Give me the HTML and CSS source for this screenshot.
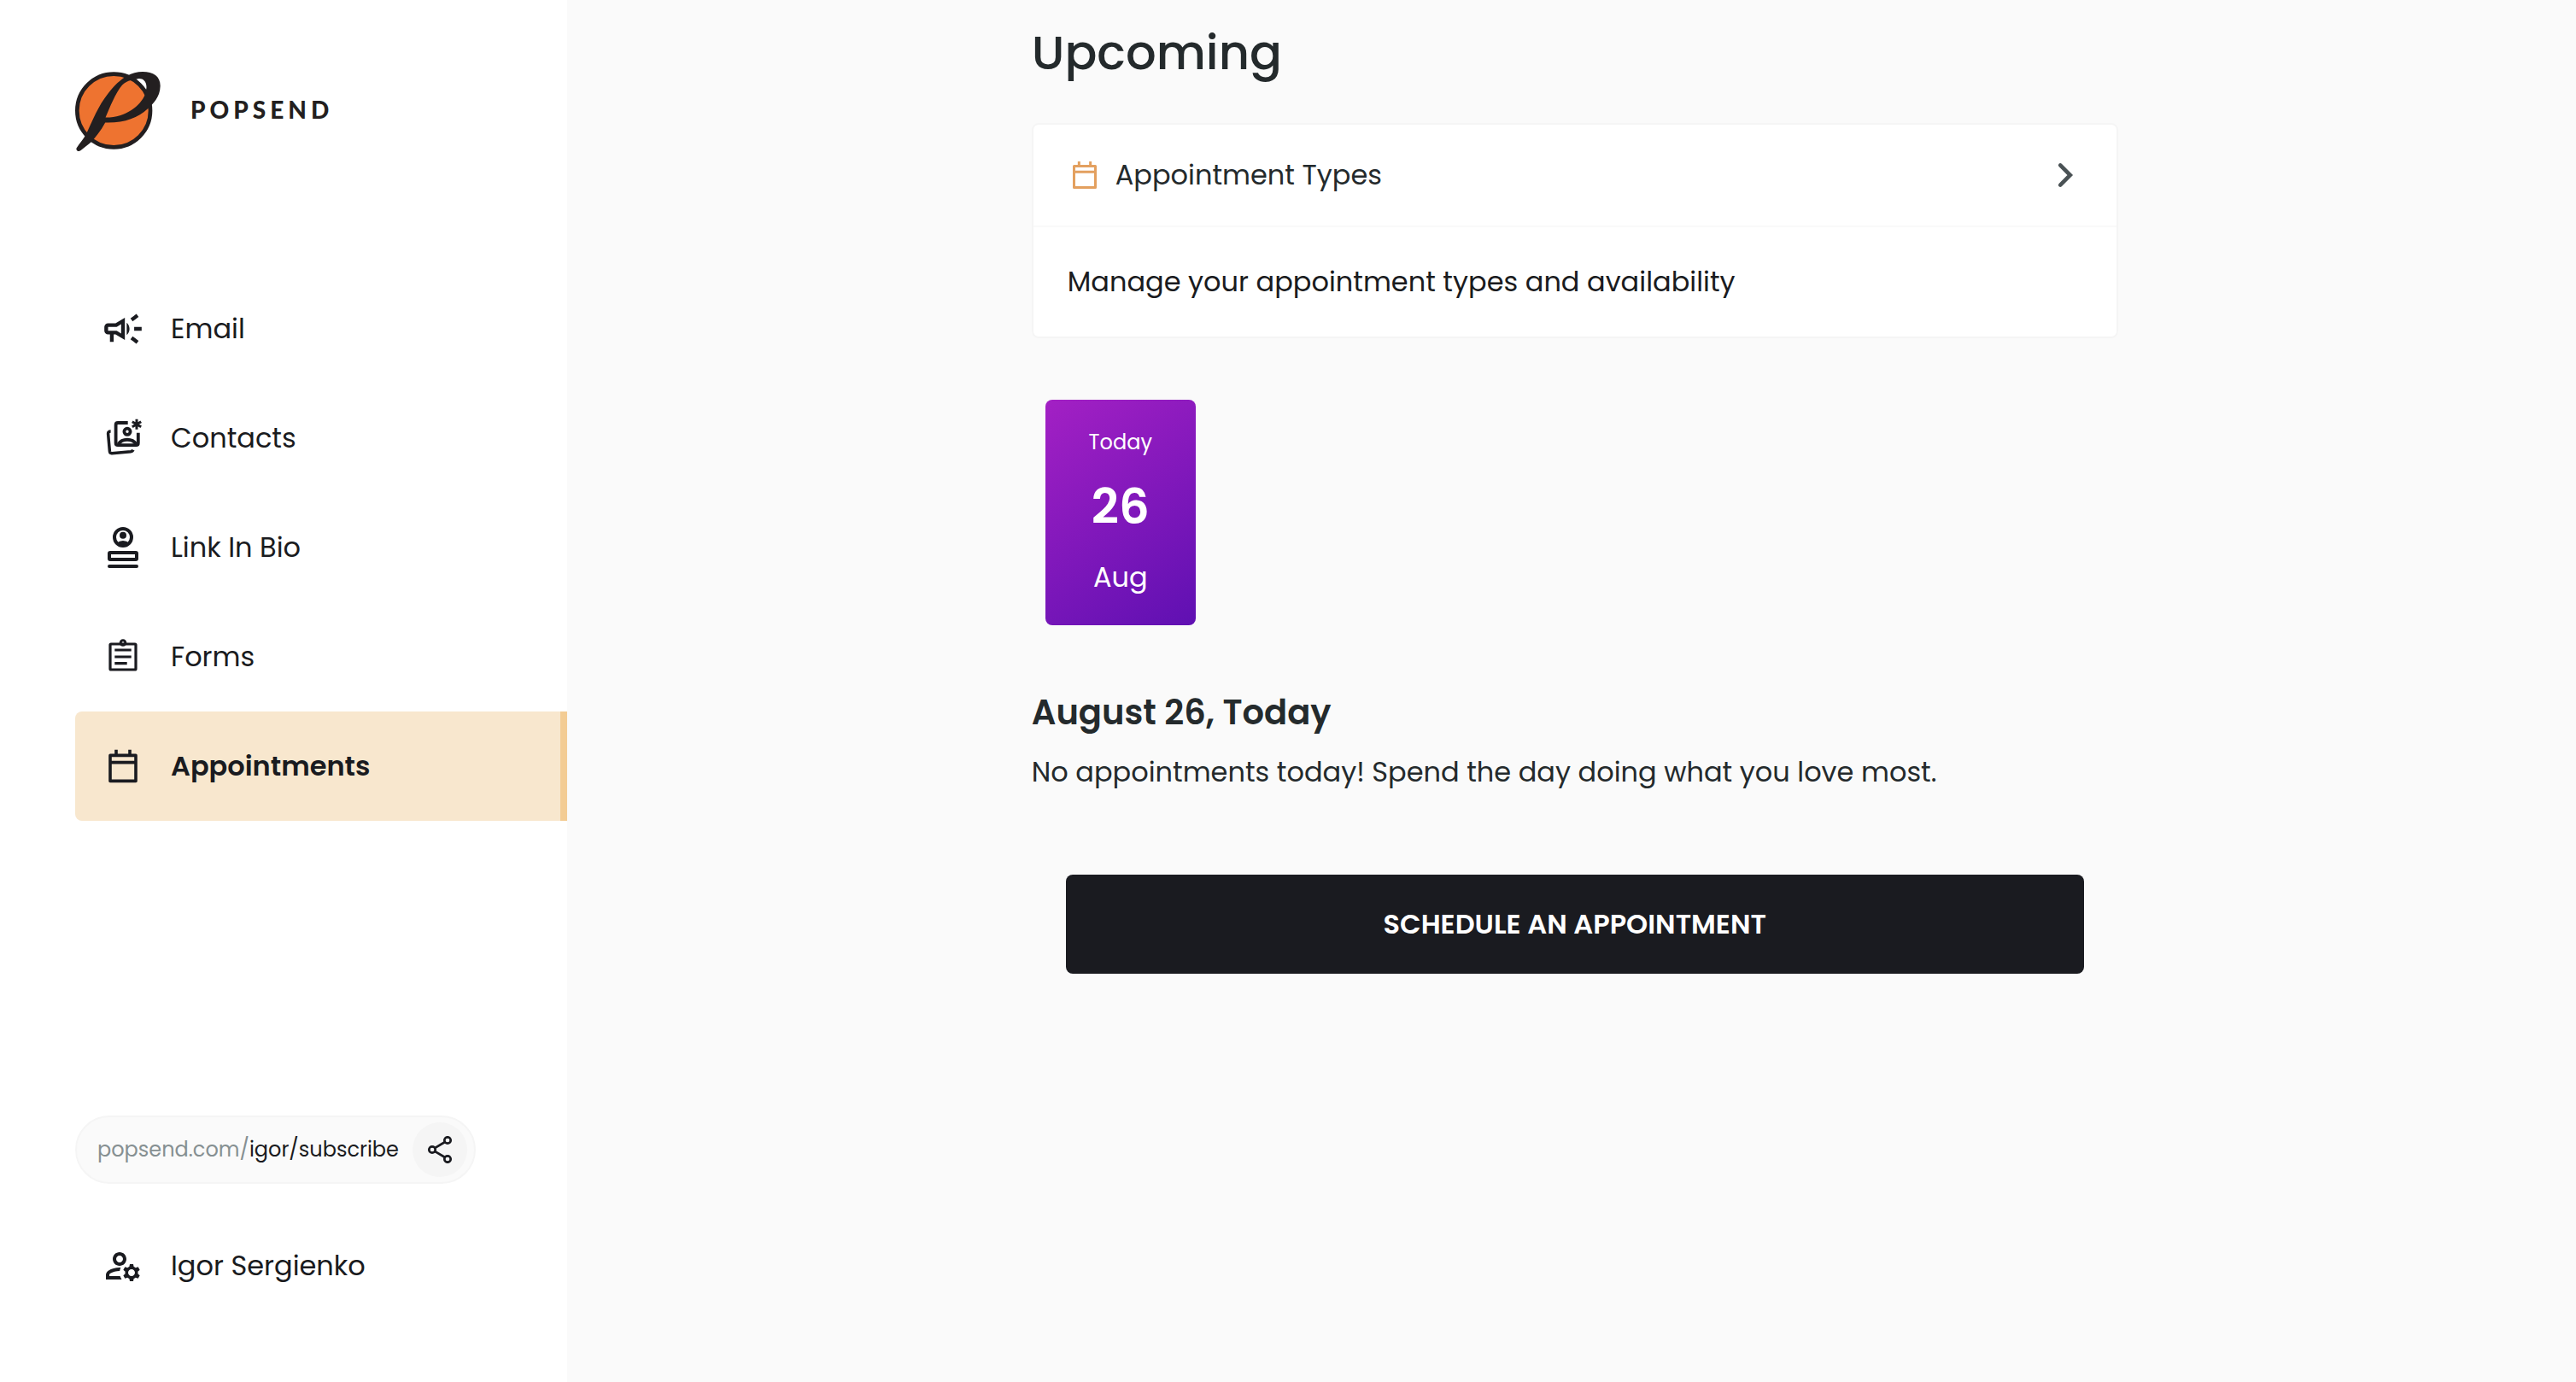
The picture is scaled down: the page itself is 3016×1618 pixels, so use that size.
FILE: index.html
```html
<!DOCTYPE html>
<html lang="en">
<head>
  <meta charset="UTF-8">
  <title>Popsend - Appointments</title>
  <meta name="viewport" content="width=device-width, initial-scale=1.0">
  <link rel="stylesheet" href="styles.css">
</head>
<body>

<!-- Shared icons -->
<svg class="sprite" aria-hidden="true">
  <symbol id="icon-calendar" viewBox="0 0 48 48">
    <path d="M9 11.4h30v30H9zM9 19.6h30M16 4.8v6M32 4.8v6" fill="none" stroke="currentColor" stroke-width="3.6" stroke-linejoin="round"/>
  </symbol>
</svg>

<div class="layout">
  <aside class="sidebar">
    <a class="logo" href="#">
      <svg class="logo-mark" viewBox="84 71 301 280" aria-hidden="true">
        <circle cx="220" cy="208" r="129" fill="#ee7330" stroke="#231f20" stroke-width="14"/>
        <path fill="#231f20" fill-rule="evenodd" d="M92 350Q86 346 89 340C103 318 118 303 126 284C145 244 166 190 200 148C222 118 245 98 266 86C284 76 302 71 322 71C360 71 385 88 384 122C383 160 359 184 340 201C304 234 256 252 190 250C174 280 156 302 139 320L104 348Q98 352 92 350ZM191 232C206 198 226 146 250 118Q264 104 280 101L300 97C318 91 338 102 335 130L330 152C314 190 262 233 191 232Z"/>
      </svg>
      <span class="logo-text">POPSEND</span>
    </a>

    <nav class="nav">
      <a class="nav-item" href="#">
        <svg class="icon" viewBox="1 1 22 22" fill="currentColor" aria-hidden="true">
          <path d="M18 11v2h4v-2zM16 17.61c.96.71 2.21 1.65 3.2 2.39.4-.53.8-1.07 1.2-1.6-.99-.74-2.24-1.68-3.2-2.4-.4.54-.8 1.08-1.2 1.61zM20.4 5.6c-.4-.53-.8-1.07-1.2-1.6-.99.74-2.24 1.68-3.2 2.4.4.53.8 1.07 1.2 1.6.96-.72 2.21-1.65 3.2-2.4zM4 9c-1.1 0-2 .9-2 2v2c0 1.1.9 2 2 2h1v4h2v-4h1l5 3V6L8 9H4zm5.03 1.71L11 9.53v4.94l-1.97-1.18-.48-.29H4v-2h4.55l.48-.29zM15.5 12c0-1.33-.58-2.53-1.5-3.35v6.69c.92-.81 1.5-2.01 1.5-3.34z"/>
        </svg>
        Email
      </a>
      <a class="nav-item" href="#">
        <svg class="icon" viewBox="0 0 48 48" fill="none" stroke="currentColor" stroke-width="3.8" aria-hidden="true">
          <path d="M29.7 6H18q-2.4 0-2.4 2.4v21.4q0 2.4 2.4 2.4h21.4q2.4 0 2.4-2.4V17.7"/>
          <circle cx="29" cy="16.3" r="3.6"/>
          <path d="M18.5 31c4.5-7 16.5-7 21 0"/>
          <path d="M9.6 16q-3.2 0-3 3l1.8 20.4q.3 2.5 2.6 2.3l22-2q2.3-.3 3-1.9" stroke-width="3.5"/>
          <path d="M40 1.7v12M34.8 4.7l10.4 6M45.2 4.7l-10.4 6" stroke-width="3"/>
        </svg>
        Contacts
      </a>
      <a class="nav-item" href="#">
        <svg class="icon" viewBox="0 0 48 48" fill="none" stroke="currentColor" stroke-width="4" aria-hidden="true">
          <circle cx="24" cy="12" r="10"/>
          <circle cx="24" cy="9.7" r="4" fill="currentColor" stroke="none"/>
          <path d="M16 19Q24 13 32 19Q24 26 16 19z" fill="currentColor" stroke="none"/>
          <rect x="8" y="30" width="32" height="8" rx="1"/>
          <path d="M8 46h32" stroke-linecap="round"/>
        </svg>
        Link In Bio
      </a>
      <a class="nav-item" href="#">
        <svg class="icon" viewBox="0 0 48 48" fill="none" stroke="currentColor" stroke-width="3.2" aria-hidden="true">
          <rect x="9" y="9" width="30" height="30" rx="1"/>
          <circle cx="24" cy="7.5" r="2.8" stroke-width="3"/>
          <path d="M14.3 16h19.4M14.3 24h19.4M14.3 31.7h14.4"/>
        </svg>
        Forms
      </a>
      <a class="nav-item active" href="#" aria-current="page">
        <svg class="icon" aria-hidden="true"><use href="#icon-calendar"/></svg>
        Appointments
      </a>
    </nav>

    <div class="sidebar-footer">
      <div class="share-link">
        <a class="share-url" href="#"><span class="share-domain">popsend.com/</span>igor/subscribe</a>
        <button class="share-button" type="button" aria-label="Share">
          <svg class="icon-share" viewBox="0 0 32 32" fill="none" stroke="currentColor" stroke-width="2.7" aria-hidden="true">
            <circle cx="25" cy="5" r="3.7"/>
            <circle cx="25" cy="27" r="3.7"/>
            <circle cx="7" cy="16" r="3.7"/>
            <path d="M10 14.2L22 7M10 17.8L22 25"/>
          </svg>
        </button>
      </div>
      <a class="nav-item" href="#">
        <svg class="icon" viewBox="0 0 24 24" fill="currentColor" aria-hidden="true">
          <path d="M4 18v-.65c0-.34.16-.66.41-.81C6.1 15.53 8.03 15 10 15c.03 0 .05 0 .08.01.1-.7.3-1.37.59-1.98-.22-.02-.44-.03-.67-.03-2.42 0-4.68.67-6.61 1.82-.88.52-1.39 1.5-1.39 2.53V20h9.26c-.42-.6-.75-1.28-.97-2H4zM10 12c2.21 0 4-1.79 4-4s-1.79-4-4-4-4 1.79-4 4 1.79 4 4 4zm0-6c1.1 0 2 .9 2 2s-.9 2-2 2-2-.9-2-2 .9-2 2-2zM20.75 16c0-.22-.03-.42-.06-.63l1.14-1.01-1-1.73-1.45.49c-.32-.27-.68-.48-1.08-.63L18 11h-2l-.3 1.49c-.4.15-.76.36-1.08.63l-1.45-.49-1 1.73 1.14 1.01c-.03.21-.06.41-.06.63s.03.42.06.63l-1.14 1.01 1 1.73 1.45-.49c.32.27.68.48 1.08.63L16 21h2l.3-1.49c.4-.15.76-.36 1.08-.63l1.45.49 1-1.73-1.14-1.01c.03-.21.06-.41.06-.63zM17 18c-1.1 0-2-.9-2-2s.9-2 2-2 2 .9 2 2-.9 2-2 2z"/>
        </svg>
        Igor Sergienko
      </a>
    </div>
  </aside>

  <main class="main">
    <div class="content">
      <h1>Upcoming</h1>

      <section class="card">
        <a class="card-header" href="#">
          <svg class="icon-small" aria-hidden="true"><use href="#icon-calendar"/></svg>
          <span class="card-title">Appointment Types</span>
          <svg class="chevron" viewBox="0 0 40 40" aria-hidden="true">
            <path d="M14.2 8.4L25.8 20L14.2 31.6" fill="none" stroke="currentColor" stroke-width="4.6" stroke-linecap="round"/>
          </svg>
        </a>
        <p class="card-body">Manage your appointment types and availability</p>
      </section>

      <div class="days">
        <button class="day" type="button">
          <span class="day-name">Today</span>
          <span class="day-number">26</span>
          <span class="day-month">Aug</span>
        </button>
      </div>

      <h2>August 26, Today</h2>
      <p>No appointments today! Spend the day doing what you love most.</p>

      <button class="schedule-button" type="button">SCHEDULE AN APPOINTMENT</button>
    </div>
  </main>
</div>

</body>
</html>
```

FILE: styles.css
```css
* {
  box-sizing: border-box;
}

body {
  margin: 0;
  font-family: Poppins, Inter, "Open Sans", sans-serif;
  font-size: 32px;
  line-height: 48px;
  color: #1a1b20;
  background-color: #fafafa;
}

h1, h2, p {
  margin: 0;
}

a {
  color: inherit;
  text-decoration: none;
}

button {
  border: none;
  font-family: inherit;
  cursor: pointer;
}

.sprite {
  display: none;
}

.layout {
  display: flex;
  min-height: 100vh;
}

/* Sidebar */
.sidebar {
  display: flex;
  flex-direction: column;
  flex: 0 0 22%;
  padding: 84px 0 72px 88px;
  background-color: #fff;
}

.logo {
  display: flex;
  align-items: flex-start;
  gap: 35px;
  margin-bottom: 144px;
}

.logo-mark {
  width: 100px;
  height: 93px;
}

.logo-text {
  font-family: Lato, sans-serif;
  font-size: 28px;
  font-weight: 900;
  line-height: 88px;
  letter-spacing: 5px;
  color: #231f20;
}

.nav-item {
  display: flex;
  align-items: center;
  gap: 32px;
  height: 128px;
  padding-left: 32px;
}

.nav-item.active {
  font-weight: 600;
  background-color: #f8e7ce;
  border-right: 8px solid #f3cc94;
  border-radius: 8px 0 0 8px;
}

.icon {
  flex: none;
  width: 48px;
  height: 48px;
}

.sidebar-footer {
  margin-top: auto;
}

.share-link {
  display: inline-flex;
  align-items: center;
  gap: 16px;
  height: 80px;
  margin-bottom: 32px;
  padding: 0 8px 0 24px;
  font-size: 24px;
  background-color: #fafafa;
  border: 2px solid #f5f5f5;
  border-radius: 40px;
  vertical-align: top;
}

.share-domain {
  color: #869092;
}

.share-button {
  display: flex;
  align-items: center;
  justify-content: center;
  width: 64px;
  height: 64px;
  padding: 0;
  color: #1a1b20;
  background-color: #f5f5f5;
  border-radius: 50%;
}

.icon-share {
  width: 32px;
  height: 32px;
}

/* Main */
.main {
  flex: 1;
  padding: 22px 0 0 8px;
  color: #242a2c;
}

.content {
  max-width: 1272px;
  margin: 0 auto;
}

h1 {
  margin-bottom: 42px;
  font-size: 56px;
  font-weight: 500;
  line-height: 80px;
}

.card {
  margin-bottom: 72px;
  background-color: #fff;
  border: 2px solid #f5f5f5;
  border-radius: 8px;
}

.card-header {
  display: flex;
  align-items: center;
  gap: 16px;
  height: 120px;
  padding: 0 40px;
  border-bottom: 2px solid #fafafa;
}

.icon-small {
  width: 40px;
  height: 40px;
  color: #e3a05f;
}

.card-title {
  flex: 1;
}

.chevron {
  width: 40px;
  height: 40px;
  color: #4a5255;
}

.card-body {
  padding: 40px;
  color: #1a1b20;
}

.days {
  display: flex;
  margin-bottom: 72px;
  padding: 0 16px;
}

.day {
  display: flex;
  flex-direction: column;
  align-items: center;
  justify-content: space-between;
  width: 176px;
  height: 264px;
  padding: 32px 0;
  color: #fff;
  background: linear-gradient(145deg, #a320c4, #5f10b2);
  border-radius: 8px;
}

.day-name {
  font-size: 24px;
  line-height: 36px;
}

.day-number {
  font-size: 56px;
  font-weight: 600;
  line-height: 72px;
}

.day-month {
  font-size: 32px;
  line-height: 48px;
}

h2 {
  margin-bottom: 16px;
  font-size: 40px;
  font-weight: 600;
  line-height: 60px;
}

.schedule-button {
  display: block;
  width: calc(100% - 80px);
  height: 116px;
  margin: 96px auto 0;
  font-size: 32px;
  font-weight: 600;
  color: #fff;
  background-color: #1a1b20;
  border-radius: 8px;
}
```
